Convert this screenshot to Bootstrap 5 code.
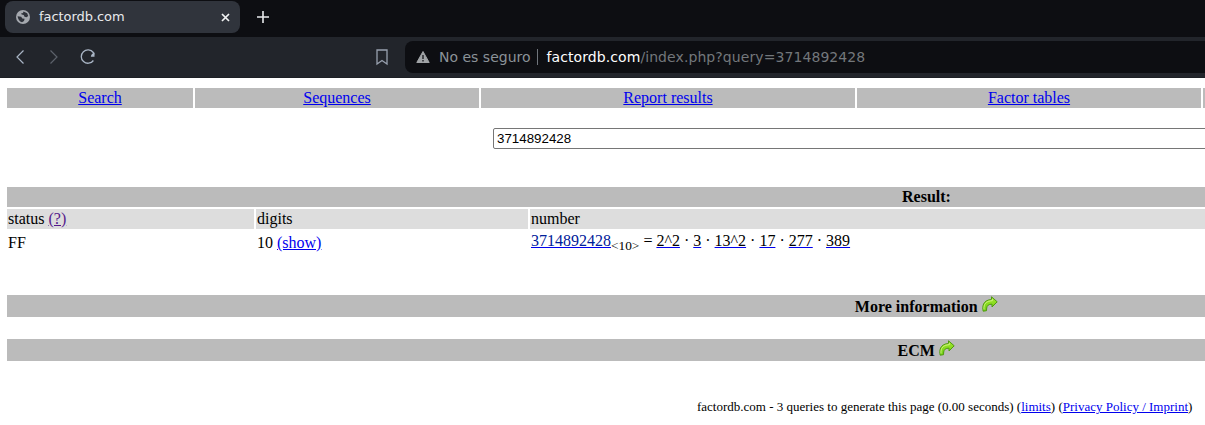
<!DOCTYPE html>
<html lang="es">
<head>
<meta charset="utf-8">
<meta name="viewport" content="width=device-width, initial-scale=1">
<title>factordb.com</title>
<link rel="stylesheet" href="https://cdn.jsdelivr.net/npm/bootstrap@5.3.0/dist/css/bootstrap.min.css">
<style>
  body { height: 425px; overflow: hidden; background: #fff; color: #000; }
  .chrome { font-family: "DejaVu Sans", sans-serif; background: #0d0e12; }
  .tabstrip { height: 37px; padding: 1px 0 0 5px; }
  .browser-tab { width: 235px; height: 32px; border-radius: 8px; background: #30343c; color: #e8eaed; font-size: 13px; letter-spacing: -.06px; padding: 0 10px; }
  .toolbar { height: 41px; background: #22252b; border-bottom: 1px solid #1d2025; }
  .toolbar .tool-left { width: 405px; padding: 0 15px 0 12px; }
  .address { height: 32px; margin-top: 4px; border-radius: 8px 0 0 8px; background: #0d0e12; font-size: 14px; padding-left: 11px; color: #8b9298; }
  .address b { font-weight: 400; color: #fff; }
  .address .rest { color: #73777b; }
  .address .url { letter-spacing: .08px; }
  .address .sep { width: 1px; height: 16px; background: #70757c; margin: 0 9px 0 6px; }
  .page { font-family: "Liberation Serif", serif; font-size: 16px; line-height: 18px; width: 1838px; margin-left: 7px; padding-top: 10px; }
  .page a { color: #00e; text-decoration: underline; }
  .page a.seen { color: #551a8b; }
  .page a.num span { color: #002099; }
  .page a.fac span { color: #000; }
  .cells { gap: 2px; }
  .cells > div { padding: 1px; flex: none; }
  .dark { background: #bbb; }
  .light { background: #ddd; }
  .w1 { width: 186px; } .w2 { width: 284px; } .w3 { width: 374px; } .w4 { width: 344px; } .w5 { width: 642px; }
  .c1 { width: 247px; } .c2 { width: 272px; } .c3 { width: 1315px; }
  .query { width: 760px; height: 21px; margin: 20px 0 38px 486px; padding: 1px 3px; border: 1px solid #767676; border-radius: 2px; font: 13.333px "Liberation Sans", sans-serif; color: #000; }
  .bar { font-weight: 700; text-align: center; padding: 1px 0 1px 1px; }
  .tall { height: 22px; line-height: 22px; padding: 1px 0 0 1px; }
  .tall svg { display: inline-block; vertical-align: top; margin-left: .5px; }
  .sub10 { font-size: 13.333px; position: relative; top: 4px; line-height: 0; color: #000; }
  .foot { font-size: 13px; line-height: 16px; margin: 38px 0 0 690px; }
</style>
</head>
<body>
<svg class="position-absolute" width="0" height="0">
  <defs>
    <linearGradient id="leaf" x1="0" y1="0" x2="0" y2="1"><stop offset="0" stop-color="#a4e62e"/><stop offset="1" stop-color="#6fd012"/></linearGradient>
  </defs>
  <symbol id="arrow" viewBox="0 0 16 16">
    <path d="M9.500.8 15.200 5.800 10 11V8.200C6.500 8 5 9.700 4.700 12L4.500 14.700 1.200 15.200C.2 11.200.5 4 9.500 3.500Z" fill="url(#leaf)" stroke="#4f9a10" stroke-width="1" stroke-linejoin="round"/>
    <path d="M2 13.500C1.500 8 4 5 10.300 4.700V3" fill="none" stroke="#dcf898" stroke-width=".8"/>
  </symbol>
</svg>
<header class="chrome">
  <div class="tabstrip d-flex">
    <div class="browser-tab d-flex align-items-center">
      <svg width="16" height="16" viewBox="0 0 16 16" class="flex-shrink-0"><circle cx="8" cy="8" r="7" fill="#a5a9af"/><path d="M2.600 7.300 6.200 7.800 7.300 9.500 9.600 9.800 9 12 7 13.300Q3 12 2.600 7.300M8.500 2.500 12.200 4.200 13.200 7 11.500 8.300 9.500 7.800 8.700 6 6.700 5.500 6 4.500 8 4Z" fill="#30343c"/></svg>
      <span class="ms-2">factordb.com</span>
      <svg class="ms-auto" width="9" height="9" viewBox="0 0 9 9"><path d="m1 1 7 7m0-7-7 7" stroke="#f1f2f3" stroke-width="1.700"/></svg>
    </div>
    <svg class="ms-3" width="14" height="32" viewBox="0 0 14 32"><path d="M7 10v12M1 16h12" stroke="#e8eaed" stroke-width="1.600"/></svg>
  </div>
  <div class="toolbar d-flex">
    <div class="tool-left d-flex align-items-center flex-shrink-0">
      <svg width="16" height="16" viewBox="0 0 16 16"><path d="M11.500 1.500 5 8l6.500 6.500" fill="none" stroke="#a9b5c5" stroke-width="1.200"/></svg>
      <svg width="16" height="16" viewBox="0 0 16 16" style="margin-left:18px"><path d="M4.500 1.500 11 8l-6.500 6.500" fill="none" stroke="#5d626b" stroke-width="1.200"/></svg>
      <svg width="18" height="18" viewBox="0 0 18 18" style="margin-left:17px"><path d="M14.400 12.500A6.700 6.700 0 1 1 14.300 4.500L15 6.500" fill="none" stroke="#a9b5c5" stroke-width="1.300"/><path d="M15.500 4.500V8.800H11.800Q12 6 15.500 4.500" fill="#a9b5c5"/></svg>
      <svg class="ms-auto" width="16" height="18" viewBox="0 0 16 18"><path d="M3 2h10v14l-5-3.500L3 16Z" fill="none" stroke="#98a0ae" stroke-width="1.300"/></svg>
    </div>
    <div class="address d-flex align-items-center flex-grow-1 text-nowrap">
      <svg width="14" height="14" viewBox="0 0 14 14" class="me-2"><path d="M7 1.500 13.200 12.500H.8Z" fill="#a0a3a6" stroke="#a0a3a6" stroke-linejoin="round"/><path d="M7 5v4M7 10v1.500" stroke="#24272b" stroke-width="1.500"/></svg>
      <span style="margin-left:1px">No es seguro</span><span class="sep"></span><span class="url"><b>factordb.com</b><span class="rest">/index.php?query=3714892428</span></span>
    </div>
  </div>
</header>
<div class="overflow-hidden w-100">
<main class="page">
  <nav class="cells d-flex text-center">
    <div class="dark w1"><a href="#">Search</a></div>
    <div class="dark w2"><a href="#">Sequences</a></div>
    <div class="dark w3"><a href="#">Report results</a></div>
    <div class="dark w4"><a href="#">Factor tables</a></div>
    <div class="dark w5"></div>
  </nav>
  <input class="query d-block" type="text" value="3714892428" aria-label="Number">
  <div class="dark bar">Result:</div>
  <div class="cells d-flex" style="margin-top:2px">
    <div class="light c1">status <a class="seen" href="#">(?)</a></div>
    <div class="light c2">digits</div>
    <div class="light c3">number</div>
  </div>
  <div class="cells d-flex align-items-start" style="margin-top:2px;height:24px">
    <div class="c1" style="padding-top:3px">FF</div>
    <div class="c2" style="padding-top:3px">10 <a href="#">(show)</a></div>
    <div class="c3"><a class="num" href="#"><span>3714892428</span></a><span class="sub10">&lt;10&gt;</span> = <a class="fac" href="#"><span>2^2</span></a> · <a class="fac" href="#"><span>3</span></a> · <a class="fac" href="#"><span>13^2</span></a> · <a class="fac" href="#"><span>17</span></a> · <a class="fac" href="#"><span>277</span></a> · <a class="fac" href="#"><span>389</span></a></div>
  </div>
  <div class="dark bar tall" style="margin-top:40px">More information <svg width="16" height="16"><use href="#arrow"/></svg></div>
  <div class="dark bar tall" style="margin-top:22px">ECM <svg width="16" height="16"><use href="#arrow"/></svg></div>
  <footer class="foot">factordb.com - 3 queries to generate this page (0.00 seconds) (<a href="#">limits</a>) (<a href="#">Privacy Policy / Imprint</a>)</footer>
</main>
</div>
<script src="https://cdn.jsdelivr.net/npm/bootstrap@5.3.0/dist/js/bootstrap.bundle.min.js"></script>
</body>
</html>
